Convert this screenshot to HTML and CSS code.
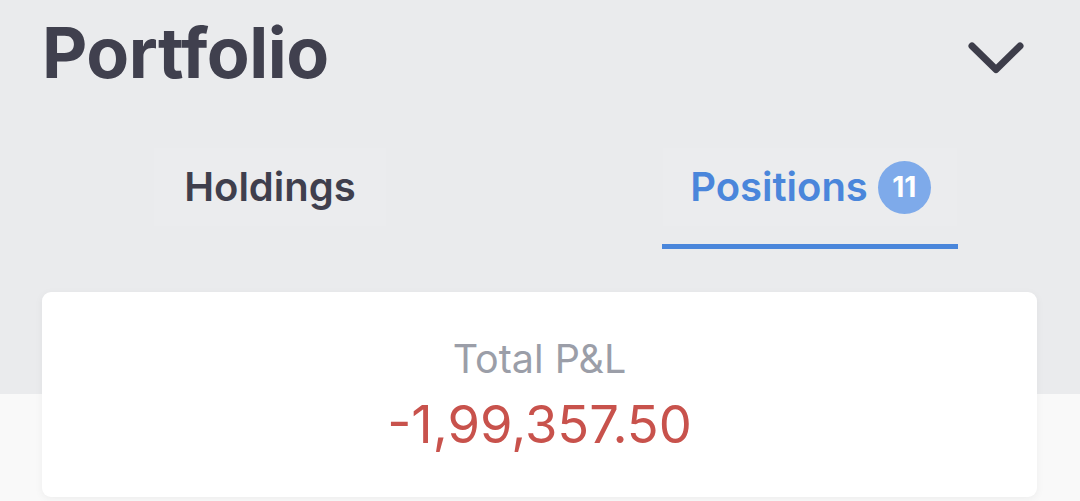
FILE: index.html
```html
<!DOCTYPE html>
<html lang="en">
<head>
  <meta charset="UTF-8" />
  <meta name="viewport" content="width=device-width, initial-scale=1.0" />
  <title>Portfolio</title>
  <link rel="stylesheet" href="styles.css">
</head>
<body>

  <div class="hero">
    <div class="header">
      <h1>Portfolio</h1>
      <svg class="chevron" width="56" height="32" viewBox="0 0 56 32">
        <polyline points="4,4 28,27.5 52,4" fill="none" stroke="#3d3d4a" stroke-width="7" stroke-linecap="round" stroke-linejoin="round"/>
      </svg>
    </div>

    <div class="tabs">
      <div class="tab">
        <span class="tab-label">Holdings</span>
        <span class="tab-line"></span>
      </div>
      <div class="tab active">
        <span class="tab-label">Positions <span class="badge">11</span></span>
        <span class="tab-line"></span>
      </div>
    </div>
  </div>

  <div class="pnl-card">
    <div class="pnl-title">Total P&amp;L</div>
    <div class="pnl-value">-1,99,357.50</div>
  </div>

</body>
</html>
```

FILE: styles.css
```css
body {
  margin: 0;
  font-family: Inter, 'Noto Sans', sans-serif;
  background: #f9f9f9;
  color: #40404e;
  width: 1080px;
  height: 501px;
  overflow: hidden;
}

.hero {
  background: #eaebed;
  height: 394px;
}

.header {
  display: flex;
  justify-content: space-between;
  align-items: flex-start;
  padding: 18px 56px 0 42px;
}

.header h1 {
  margin: 0;
  font-size: 70px;
  line-height: 1;
  font-weight: 700;
  letter-spacing: -0.5px;
}

.chevron {
  margin-top: 24px;
}

.tabs {
  display: flex;
  margin-top: 60px;
}

.tab {
  flex: 1;
  display: flex;
  flex-direction: column;
  align-items: center;
  gap: 18px;
}

.tab-label {
  display: flex;
  align-items: center;
  gap: 10px;
  padding: 14px 30px;
  height: 50px;
  font-size: 40px;
  line-height: 50px;
  font-weight: 600;
  background: #ebecee;
  color: #3f3f4d;
}

.tab-line {
  width: 100%;
  height: 5px;
}

.tab.active .tab-label {
  color: #4a86db;
  padding: 14px 26px 14px 27px;
}

.tab.active .tab-line {
  background: #4a86db;
  width: 296px;
}

.badge {
  display: inline-flex;
  align-items: center;
  justify-content: center;
  width: 53px;
  height: 53px;
  border-radius: 50%;
  background: #7eaaea;
  color: #fff;
  font-size: 28px;
  font-weight: 700;
  line-height: 1;
}

.pnl-card {
  position: relative;
  margin: -102px 43px 0 42px;
  height: 205px;
  box-sizing: border-box;
  padding-top: 44px;
  background: #fff;
  border-radius: 9px;
  box-shadow: 0 2px 8px rgba(0,0,0,0.05);
  text-align: center;
}

.pnl-title {
  font-size: 39.5px;
  line-height: 46px;
  color: #9b9ea8;
}

.pnl-value {
  margin-top: 11px;
  font-size: 52.5px;
  line-height: 62px;
  color: #c8524c;
}
```
